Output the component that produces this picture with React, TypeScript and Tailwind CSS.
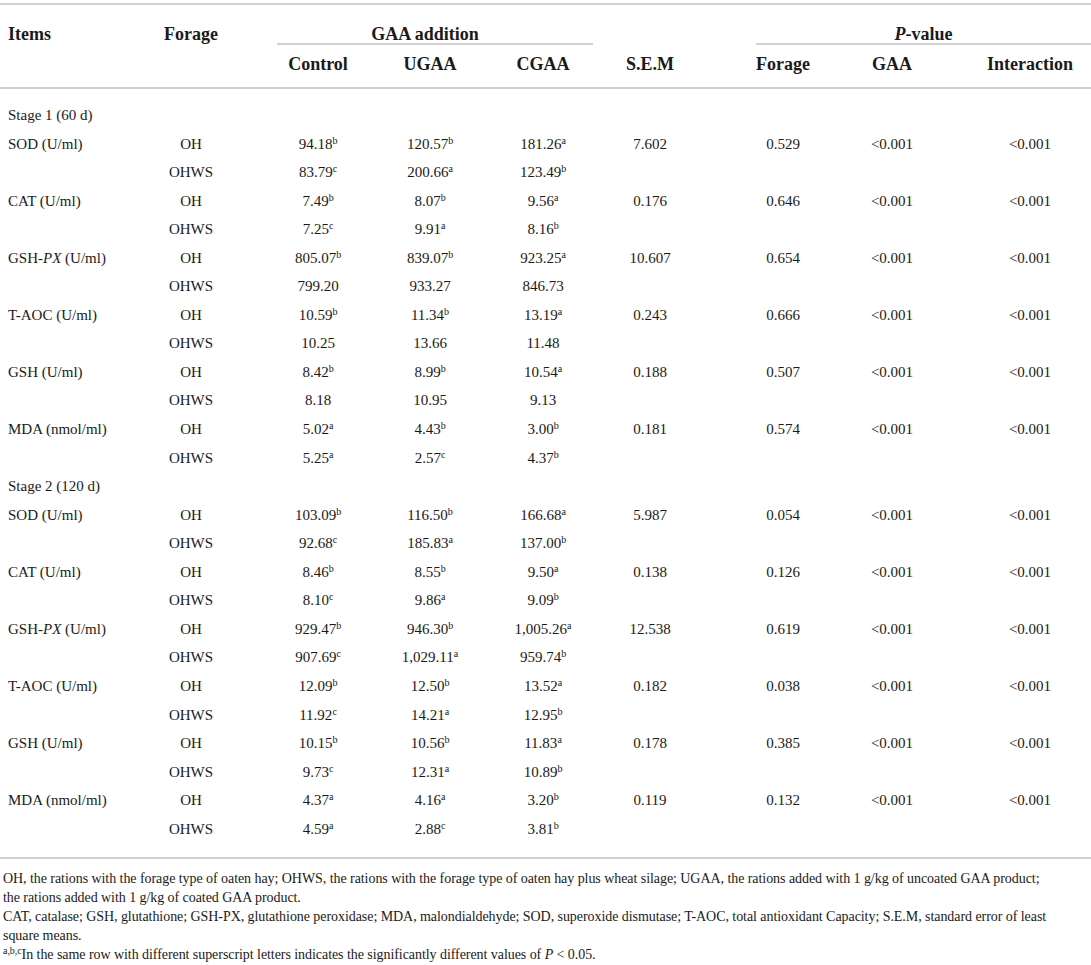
import React from "react";

type Cell = { v: string; s?: string };

interface DataRow {
  item?: React.ReactNode;
  forage: string;
  vals: Cell[];
  sem?: string;
  pf?: string;
}

const c = (v: string, s?: string): Cell => ({ v, s });

const gshPx = (
  <>
    GSH-<i>PX</i> (U/ml)
  </>
);

const stage1: DataRow[] = [
  { item: "SOD (U/ml)", forage: "OH", vals: [c("94.18", "b"), c("120.57", "b"), c("181.26", "a")], sem: "7.602", pf: "0.529" },
  { forage: "OHWS", vals: [c("83.79", "c"), c("200.66", "a"), c("123.49", "b")] },
  { item: "CAT (U/ml)", forage: "OH", vals: [c("7.49", "b"), c("8.07", "b"), c("9.56", "a")], sem: "0.176", pf: "0.646" },
  { forage: "OHWS", vals: [c("7.25", "c"), c("9.91", "a"), c("8.16", "b")] },
  { item: gshPx, forage: "OH", vals: [c("805.07", "b"), c("839.07", "b"), c("923.25", "a")], sem: "10.607", pf: "0.654" },
  { forage: "OHWS", vals: [c("799.20"), c("933.27"), c("846.73")] },
  { item: "T-AOC (U/ml)", forage: "OH", vals: [c("10.59", "b"), c("11.34", "b"), c("13.19", "a")], sem: "0.243", pf: "0.666" },
  { forage: "OHWS", vals: [c("10.25"), c("13.66"), c("11.48")] },
  { item: "GSH (U/ml)", forage: "OH", vals: [c("8.42", "b"), c("8.99", "b"), c("10.54", "a")], sem: "0.188", pf: "0.507" },
  { forage: "OHWS", vals: [c("8.18"), c("10.95"), c("9.13")] },
  { item: "MDA (nmol/ml)", forage: "OH", vals: [c("5.02", "a"), c("4.43", "b"), c("3.00", "b")], sem: "0.181", pf: "0.574" },
  { forage: "OHWS", vals: [c("5.25", "a"), c("2.57", "c"), c("4.37", "b")] },
];

const stage2: DataRow[] = [
  { item: "SOD (U/ml)", forage: "OH", vals: [c("103.09", "b"), c("116.50", "b"), c("166.68", "a")], sem: "5.987", pf: "0.054" },
  { forage: "OHWS", vals: [c("92.68", "c"), c("185.83", "a"), c("137.00", "b")] },
  { item: "CAT (U/ml)", forage: "OH", vals: [c("8.46", "b"), c("8.55", "b"), c("9.50", "a")], sem: "0.138", pf: "0.126" },
  { forage: "OHWS", vals: [c("8.10", "c"), c("9.86", "a"), c("9.09", "b")] },
  { item: gshPx, forage: "OH", vals: [c("929.47", "b"), c("946.30", "b"), c("1,005.26", "a")], sem: "12.538", pf: "0.619" },
  { forage: "OHWS", vals: [c("907.69", "c"), c("1,029.11", "a"), c("959.74", "b")] },
  { item: "T-AOC (U/ml)", forage: "OH", vals: [c("12.09", "b"), c("12.50", "b"), c("13.52", "a")], sem: "0.182", pf: "0.038" },
  { forage: "OHWS", vals: [c("11.92", "c"), c("14.21", "a"), c("12.95", "b")] },
  { item: "GSH (U/ml)", forage: "OH", vals: [c("10.15", "b"), c("10.56", "b"), c("11.83", "a")], sem: "0.178", pf: "0.385" },
  { forage: "OHWS", vals: [c("9.73", "c"), c("12.31", "a"), c("10.89", "b")] },
  { item: "MDA (nmol/ml)", forage: "OH", vals: [c("4.37", "a"), c("4.16", "a"), c("3.20", "b")], sem: "0.119", pf: "0.132" },
  { forage: "OHWS", vals: [c("4.59", "a"), c("2.88", "c"), c("3.81", "b")] },
];

const grid = "grid grid-cols-[130px_124px_120px_112px_110px_120px_122px_124px_129px]";

// per-column nudges so each column sits under its header
const col = [
  "pl-2 text-left",
  "pr-[2px] text-center",
  "pl-[8px] text-center",
  "text-center",
  "pl-[4px] text-center",
  "pr-[12px] text-center",
  "pl-[12px] text-center",
  "pr-[16px] text-center",
  "pl-[7px] text-center",
];

const Val = ({ cell }: { cell: Cell }) => (
  <span>
    {cell.v}
    {cell.s && <sup className="text-[10px]">{cell.s}</sup>}
  </span>
);

const Row = ({ row }: { row: DataRow }) => (
  <div className={`${grid} h-[28.56px] items-center whitespace-nowrap`}>
    <div className={col[0]}>{row.item}</div>
    <div className={col[1]}>{row.forage}</div>
    {row.vals.map((v, i) => (
      <div key={i} className={col[i + 2]}>
        <Val cell={v} />
      </div>
    ))}
    <div className={col[5]}>{row.sem}</div>
    <div className={col[6]}>{row.pf}</div>
    <div className={col[7]}>{row.sem ? "<0.001" : ""}</div>
    <div className={col[8]}>{row.sem ? "<0.001" : ""}</div>
  </div>
);

const StageRow = ({ label }: { label: string }) => (
  <div className="flex h-[28.56px] items-center pl-2 whitespace-nowrap">{label}</div>
);

export default function App() {
  return (
    <div className="w-[1091px] bg-white pt-[3px] font-['Liberation_Serif',serif] text-[15px] text-[#1a1a1a]">
      {/* header */}
      <div className="border-t-2 border-[#d0d0d0]">
        <div className={`${grid} h-[38px] items-start pt-[20px] text-[18px] leading-[18px] font-bold whitespace-nowrap`}>
          <div className={col[0]}>Items</div>
          <div className={col[1]}>Forage</div>
          <div className="col-span-3 text-center">GAA addition</div>
          <div />
          <div className="col-span-3 ml-[40px] text-center">
            <i>P</i>-value
          </div>
        </div>
        <div className={grid}>
          <div className="col-span-2" />
          <div className="col-span-3 ml-[23px] mr-[3px] h-[2px] bg-[#d0d0d0]" />
          <div />
          <div className="col-span-3 ml-[40px] h-[2px] bg-[#d0d0d0]" />
        </div>
        <div className={`${grid} h-[42px] items-center pb-[4px] text-[18px] font-bold whitespace-nowrap`}>
          <div />
          <div />
          <div className={col[2]}>Control</div>
          <div className={col[3]}>UGAA</div>
          <div className={col[4]}>CGAA</div>
          <div className={col[5]}>S.E.M</div>
          <div className={col[6]}>Forage</div>
          <div className={col[7]}>GAA</div>
          <div className={col[8]}>Interaction</div>
        </div>
      </div>

      {/* body */}
      <div className="border-t-2 border-[#d0d0d0] pt-[12px] pb-[14px]">
        <StageRow label="Stage 1 (60 d)" />
        {stage1.map((r, i) => (
          <Row key={`a${i}`} row={r} />
        ))}
        <StageRow label="Stage 2 (120 d)" />
        {stage2.map((r, i) => (
          <Row key={`b${i}`} row={r} />
        ))}
      </div>

      {/* footnotes */}
      <div className="border-t-2 border-[#d0d0d0] pt-[10px] pl-[3px] text-[14px] leading-[19px] tracking-[-0.06px]">
        <p>
          OH, the rations with the forage type of oaten hay; OHWS, the rations with the forage type of oaten hay plus wheat silage; UGAA, the
          rations added with 1 g/kg of uncoated GAA product;
          <br />
          the rations added with 1 g/kg of coated GAA product.
        </p>
        <p>
          CAT, catalase; GSH, glutathione; GSH-PX, glutathione peroxidase; MDA, malondialdehyde; SOD, superoxide dismutase; T-AOC, total
          antioxidant Capacity; S.E.M, standard error of least
          <br />
          square means.
        </p>
        <p>
          <sup className="text-[10px]">a,b,c</sup>In the same row with different superscript letters indicates the significantly different values of{" "}
          <i>P</i> &lt; 0.05.
        </p>
      </div>
    </div>
  );
}
